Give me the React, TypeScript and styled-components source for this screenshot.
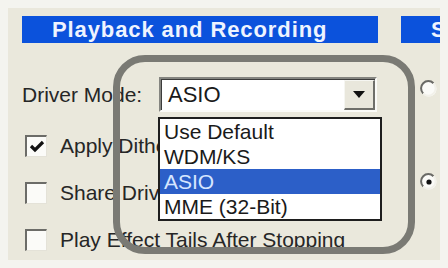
import React from "react";
import styled, { createGlobalStyle } from "styled-components";

const GlobalStyle = createGlobalStyle`
  html, body {
    margin: 0;
    padding: 0;
    background: #f4f4ef;
  }
  body {
    width: 448px;
    height: 268px;
    overflow: hidden;
    font-family: "Liberation Sans", Arial, sans-serif;
  }
`;

const Frame = styled.div`
  width: 448px;
  height: 268px;
  padding: 8px 0 0 8px;
  box-sizing: border-box;
  background: #f4f4ef;
`;

const Panel = styled.div`
  position: relative;
  width: 432px;
  height: 252px;
  box-sizing: border-box;
  padding: 8px 0 0 14px;
  background: #eae8dc;
  overflow: hidden;
  display: grid;
  grid-template-columns: 356px 60px;
  column-gap: 23px;
  align-items: start;
`;

const Column = styled.div`
  display: flex;
  flex-direction: column;
`;

const HeaderBar = styled.div`
  height: 27px;
  background: #0b52dc;
  color: #eef4ff;
  font-weight: bold;
  font-size: 22px;
  letter-spacing: 0.9px;
  line-height: 28px;
  padding-left: 30px;
  white-space: nowrap;
  overflow: hidden;
`;

const DriverRow = styled.div`
  margin-top: 34px;
  height: 35px;
  display: flex;
  align-items: center;
`;

const Label = styled.span`
  width: 137px;
  font-size: 21px;
  color: #262626;
  white-space: nowrap;
`;

const ComboWrap = styled.div`
  position: relative;
  width: 218px;
  height: 35px;
`;

const Combo = styled.div`
  box-sizing: border-box;
  width: 100%;
  height: 100%;
  background: #fff;
  border-top: 2px solid #858580;
  border-left: 2px solid #858580;
  border-bottom: 2px solid #fbfbf8;
  border-right: 2px solid #fbfbf8;
  box-shadow: inset 1px 1px 0 #3c3c3c;
  display: flex;
  align-items: center;
  padding-left: 7px;
  font-size: 22px;
  color: #1a1a1a;
`;

const ComboText = styled.span`
  flex: 1;
`;

const DropButton = styled.div`
  align-self: stretch;
  width: 31px;
  margin: 1px 0 0 0;
  box-sizing: border-box;
  background: #e9e7dc;
  border-top: 1px solid #f6f6f2;
  border-left: 1px solid #f6f6f2;
  border-right: 2px solid #6f6f6a;
  border-bottom: 2px solid #6f6f6a;
  display: flex;
  align-items: center;
  justify-content: center;
`;

const Arrow = styled.div`
  width: 0;
  height: 0;
  border-left: 6px solid transparent;
  border-right: 6px solid transparent;
  border-top: 7px solid #111;
`;

const ListBox = styled.div`
  position: absolute;
  left: -1px;
  top: 40px;
  width: 224px;
  box-sizing: border-box;
  background: #fff;
  border: 2px solid #1e1e1e;
  z-index: 2;
`;

const ListItem = styled.div<{ $selected?: boolean }>`
  height: 25px;
  line-height: 26px;
  padding-left: 4px;
  font-size: 21px;
  color: ${(p) => (p.$selected ? "#d6e6ff" : "#1a1a1a")};
  background: ${(p) => (p.$selected ? "#2c5fc8" : "transparent")};
  white-space: nowrap;
`;

const CheckList = styled.div`
  margin-top: 23px;
  display: flex;
  flex-direction: column;
  gap: 25px;
`;

const CheckRow = styled.div`
  height: 22px;
  display: flex;
  align-items: center;
  gap: 13px;
  padding-left: 3px;
`;

const Box = styled.div`
  width: 22px;
  height: 22px;
  box-sizing: border-box;
  background: #fbfbf8;
  border-top: 2px solid #6c6c68;
  border-left: 2px solid #6c6c68;
  border-right: 1px solid #e4e2d8;
  border-bottom: 1px solid #e4e2d8;
  display: flex;
  align-items: center;
  justify-content: center;
  flex: none;
`;

const CheckLabel = styled.span`
  font-size: 21px;
  color: #262626;
  white-space: nowrap;
`;

const RadioStack = styled.div`
  display: flex;
  flex-direction: column;
  padding-left: 19px;
`;

const RadioSlot = styled.div<{ $mt: number }>`
  margin-top: ${(p) => p.$mt}px;
  width: 18px;
  height: 18px;
`;

const Annotation = styled.div`
  position: absolute;
  left: 105px;
  top: 47px;
  width: 302px;
  height: 199px;
  box-sizing: border-box;
  border: 7px solid #7a7a74;
  border-radius: 32px;
  filter: blur(0.6px);
  z-index: 3;
  pointer-events: none;
`;

function Radio({ checked }: { checked?: boolean }) {
  return (
    <svg width="18" height="18" viewBox="0 0 18 18">
      <circle cx="9" cy="9" r="7.5" fill="#fbfbf8" />
      <path d="M3.2 13.5 A7 7 0 0 1 13.5 3.2" stroke="#6a6a66" strokeWidth="2" fill="none" />
      <path d="M13.5 3.2 A7 7 0 0 1 3.2 13.5" stroke="#f2f1ea" strokeWidth="2" fill="none" />
      {checked && <circle cx="9" cy="9" r="2.6" fill="#111" />}
    </svg>
  );
}

function Check() {
  return (
    <svg width="16" height="14" viewBox="0 0 16 14">
      <path d="M2 6 L6 10 L14 2" stroke="#111" strokeWidth="3.2" fill="none" />
    </svg>
  );
}

const items = ["Use Default", "WDM/KS", "ASIO", "MME (32-Bit)"];

export default function App() {
  return (
    <>
      <GlobalStyle />
      <Frame>
        <Panel>
          <Column>
            <HeaderBar>Playback and Recording</HeaderBar>
            <DriverRow>
              <Label>Driver Mode:</Label>
              <ComboWrap>
                <Combo>
                  <ComboText>ASIO</ComboText>
                  <DropButton>
                    <Arrow />
                  </DropButton>
                </Combo>
                <ListBox>
                  {items.map((it) => (
                    <ListItem key={it} $selected={it === "ASIO"}>
                      {it}
                    </ListItem>
                  ))}
                </ListBox>
              </ComboWrap>
            </DriverRow>
            <CheckList>
              <CheckRow>
                <Box>
                  <Check />
                </Box>
                <CheckLabel>Apply Dither to Output</CheckLabel>
              </CheckRow>
              <CheckRow>
                <Box />
                <CheckLabel>Share Driver with Other Apps</CheckLabel>
              </CheckRow>
              <CheckRow>
                <Box />
                <CheckLabel>Play Effect Tails After Stopping</CheckLabel>
              </CheckRow>
            </CheckList>
          </Column>
          <Column>
            <HeaderBar>Settings</HeaderBar>
            <RadioStack>
              <RadioSlot $mt={37}>
                <Radio />
              </RadioSlot>
              <RadioSlot $mt={75}>
                <Radio checked />
              </RadioSlot>
            </RadioStack>
          </Column>
          <Annotation />
        </Panel>
      </Frame>
    </>
  );
}
